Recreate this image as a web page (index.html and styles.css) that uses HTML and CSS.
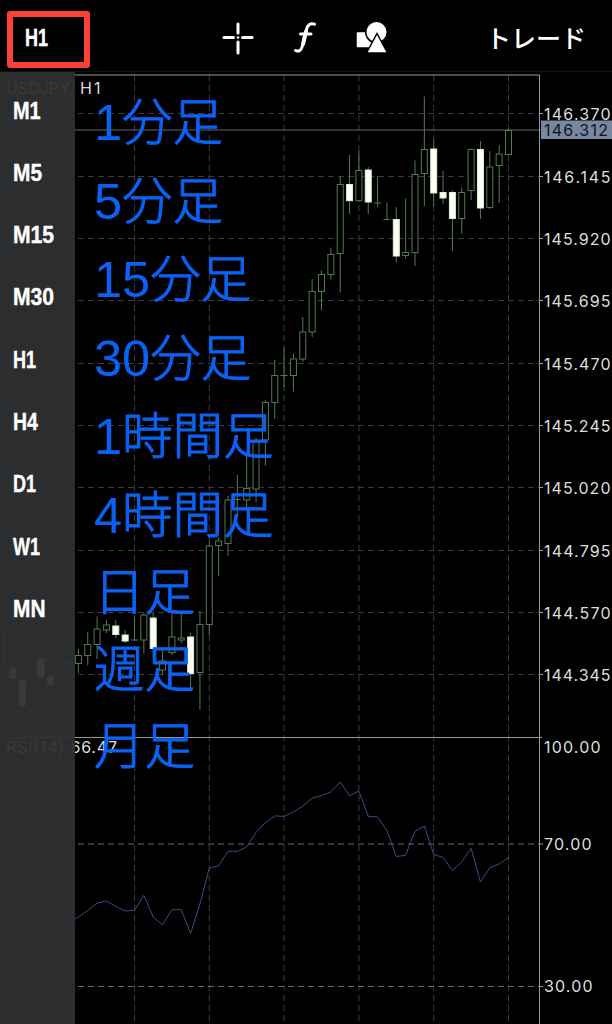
FILE: index.html
```html
<!DOCTYPE html>
<html lang="ja">
<head>
<meta charset="utf-8">
<title>USDJPY H1</title>
<link rel="stylesheet" href="styles.css">
</head>
<body>
<header class="toolbar">
  <button class="current"><span class="narrow h1">H1</span></button>
  <nav class="tools">
    <svg width="32" height="32" viewBox="0 0 32 32" class="stroke"><path d="M16 2V11M16 20V31M1.900 15.500H11.500M20.500 15.500H30.100"/><circle cx="16" cy="15.500" r="1.300" class="dot"/></svg>
    <svg width="24" height="32" viewBox="0 0 24 32" class="stroke fx"><path d="M1.500 28.500C5.500 30.500 7.600 27.500 8.700 23L12.500 7.500C13.700 2.500 16.500 .8 20.500 2.200M6.500 12H17"/><path class="stem" d="M9.200 21.500L12 9.500"/></svg>
    <svg width="32" height="32" viewBox="0 0 32 32" class="shapes"><rect x="1" y="9.500" width="16" height="16.500" rx="1.500"/><circle cx="21.500" cy="10" r="10.800"/><path d="M22 11.500L32.500 31H11.500Z"/></svg>
  </nav>
  <span class="trade">トレード</span>
</header>
<main class="stage">
  <svg id="chart" class="chart" width="612" height="952" viewBox="0 72 612 952"></svg>
  <ul class="frames">
    <li><span class="narrow m1">M1</span></li>
    <li><span class="narrow m5">M5</span></li>
    <li><span class="narrow m15">M15</span></li>
    <li><span class="narrow m15">M30</span></li>
    <li><span class="narrow h1">H1</span></li>
    <li><span class="narrow h4">H4</span></li>
    <li><span class="narrow h1">D1</span></li>
    <li><span class="narrow h1">W1</span></li>
    <li><span class="narrow m5">MN</span></li>
  </ul>
  <ul class="notes">
    <li><b>1</b>分足</li><li><b>5</b>分足</li><li><b>15</b>分足</li><li><b>30</b>分足</li><li><b>1</b>時間足</li><li><b>4</b>時間足</li>
    <li class="long">日足</li><li class="long">週足</li><li class="long">月足</li>
  </ul>
</main>
<script src="chart.js"></script>
</body>
</html>
```
FILE: styles.css
```css
* { box-sizing: border-box; }
body { margin: 0; width: 612px; height: 1024px; overflow: hidden; background: #000; color: #fff; font-family: "Liberation Sans", "Noto Sans CJK JP", sans-serif; }
ul { list-style: none; margin: 0; padding: 0; }
.toolbar { height: 72px; display: flex; align-items: center; padding: 8px 26px 4px 7px; border-bottom: 1px solid #111; }
.current { width: 83px; height: 57px; margin-top: 3px; padding: 0 0 2px 12px; text-align: left; background: none; border: 6px solid #fb4038; border-radius: 3px; color: #fff; }
.narrow { display: inline-block; font: bold 24px/28px "Liberation Sans", sans-serif; transform-origin: 0 50%; -webkit-text-stroke: .4px #fff; }
.m1 { transform: scaleX(.83); }
.m5 { transform: scaleX(.87); }
.m15 { transform: scaleX(.88); }
.h1 { transform: scaleX(.75); }
.h4 { transform: scaleX(.81); }
.tools { display: flex; align-items: center; margin-left: 131.500px; }
.tools svg { display: block; overflow: visible; }
.tools .fx { margin: 0 37px 0 40.500px; }
.stroke { fill: none; stroke: #fff; stroke-width: 3; stroke-linecap: round; }
.stroke .dot { fill: #fff; stroke: none; }
.stroke .stem { stroke-width: 4; }
.shapes { fill: #fff; stroke: #000; stroke-width: 1.500px; }
.trade { margin-left: auto; margin-top: -2px; font: 500 25px/30px "Noto Sans CJK JP", sans-serif; }
.stage { height: 952px; display: grid; grid-template-columns: 75px 1fr; }
.chart { grid-area: 1 / 1 / 2 / 3; display: block; }
.frames { grid-area: 1 / 1 / 2 / 2; z-index: 1; background: rgba(46, 47, 50, .95); padding: 6.500px 0 0 12.700px; }
.frames li { height: 62.300px; padding-top: 18px; }
.notes { grid-area: 1 / 2 / 2 / 3; z-index: 1; padding: 12px 0 0 19px; color: #0a62f5; font-size: 50.500px; font-weight: 300; line-height: 78.500px; -webkit-text-stroke: 1px #0a62f5; }
.notes b { font-weight: 400; -webkit-text-stroke: 0; }
.notes li { height: 78.500px; white-space: nowrap; }
.notes .long { height: 77px; line-height: 75px; }
.grid { stroke: #3c3c3c; stroke-dasharray: 6 4; fill: none; }
.level { stroke: #6a6a6a; stroke-dasharray: 6 4; fill: none; }
.frame { stroke: #9a9a9a; fill: none; }
.bid { stroke: #626466; }
.candle { stroke: #527b50; fill: #000; }
.candle.down { stroke: #dcefd5; fill: #fffff5; }
.wick { stroke: #527b50; }
.rsi { stroke: #414983; fill: none; }
.axis { fill: #dedede; font: 16px Inter, sans-serif; }
.tag { fill: #7788a0; }
.axis.now { fill: #10161e; }
```
FILE: chart.js
```js
const svg = document.getElementById("chart");
const STEP = 9.35, LAST = 508.5;

function add(tag, attrs, text) {
  const el = document.createElementNS("http://www.w3.org/2000/svg", tag);
  for (const k in attrs) el.setAttribute(k, attrs[k]);
  if (text) el.textContent = text;
  svg.appendChild(el);
}
const line = (cls, x1, y1, x2, y2) => add("line", { class: cls, x1, y1, x2, y2 });
const label = (x, y, text, w, cls) =>
  add("text", { x, y, class: "axis " + (cls || ""), textLength: w, lengthAdjust: "spacing" }, text);

// high, body top, body bottom, low, filled
const candles = [
  [627,640,640,667],[666,668,678,680,1],[678,681,705,718,1],[650,659,681,690],[655,659,677,680,1],
  [674,677,685,688,1],[670,678,684,688],[660,663,678,684],
  [649,655.5,663.5,673],[632,644.5,655.5,665.5],[616.5,629,644.5,659],[620,625,630,633],
  [620,626,634.5,638,1],[630,635,641,643,1],[618,640,640,641],[613,615,640,653.5],
  [613,618,648.5,657,1],[649,661,670,675],[613,637,652.5,655],[612,638,640,643],
  [633,637,673.5,691,1],[611,624.5,672.5,710],[541,546,624.5,635],[537,541,545.5,576],
  [496,500,543.5,556],[475,499.5,499.5,515],[455,488.5,500,508],[438,440.5,489,502],
  [400,402.5,440,465.5],[360,375.5,402.5,419],[348,375.5,375.5,387],[353.5,359,375.5,391.5],
  [317,332,359,362],[279,291.5,332,337],[270.5,274.5,291.5,310],[247.5,254.5,274.5,279.5],
  [176.5,184.5,253.5,292.5],[155,184.5,200.7,214,1],[151,170.5,200.7,202],[167,170,202,214,1],
  [176,203,203,207.5],[202.5,219.5,219.5,220],[207,219.5,256,262.5,1],[198.5,252.5,255.5,259],
  [160.5,174.5,252.5,266],[96.5,149.5,173.5,206],[139.5,149,193,206,1],[171,192.5,198,204,1],
  [190.5,192.5,218.5,251,1],[187.5,192.5,218.5,233.5],[148.5,149.5,190.5,200],[141,149.5,208,219,1],
  [151,167,207.5,209],[145,154,165.5,203],[128.5,130.5,154.5,155]
];
const rsi = [
  930,934,928,925,932,927,926,922,
  917,910.5,903,901,906.5,911,910.3,895.3,917,924.7,909.7,909.7,933.5,904,868,865.7,851.3,851.3,
  847,832.5,822.5,816,816.3,812,806,798.3,795.5,792,782,795.7,791,816.3,817,830.5,856.5,855.3,
  831.3,826,854.5,857.5,870.5,862,848.3,882,867.7,864,857.3
];
const xAt = (i, n) => LAST - (n - 1 - i) * STEP;

for (let i = 0; i < 7; i++) line("grid", 508.5 - i * 74.8, 75, 508.5 - i * 74.8, 1024);
const prices = ["146.370","146.145","145.920","145.695","145.470","145.245","145.020","144.795","144.570","144.345"];
prices.forEach((p, i) => {
  const y = Math.round(113.3 + i * 62.35) + 0.5;
  line("grid", -2, y, 539, y);
  line("frame", 539, y, 543, y);
  label(544, y + 6.2, p, 66.5);
});
line("level", -2, 844, 539, 844);
line("level", -2, 986.5, 539, 986.5);
line("frame", 539, 844, 543, 844);
line("frame", 539, 986.5, 543, 986.5);
line("bid", 0, 130, 541, 130);

candles.forEach(([hi, top, bot, lo, down], i) => {
  const x = xAt(i, candles.length);
  line("wick", x, hi, x, lo);
  if (top === bot) line("wick", x - 3.5, top, x + 3.5, top);
  else add("rect", { class: "candle" + (down ? " down" : ""), x: x - 3, y: top, width: 6, height: bot - top });
});

add("polyline", { class: "rsi", points: rsi.map((y, i) => xAt(i, rsi.length) + "," + y).join(" ") });
line("frame", 0, 75, 539.5, 75);
line("frame", 539.5, 75, 539.5, 1024);
line("frame", 0, 737.5, 542, 737.5);
label(544, 752.5, "100.00", 56.5);
label(544, 849.8, "70.00", 47.5);
label(544, 992, "30.00", 48.5);
add("rect", { class: "tag", x: 541, y: 120.5, width: 71, height: 18.5 });
label(544, 136, "146.312", 64, "now");
label(6, 94, "USDJPY,", 68);
label(80, 94, "H1", 20.5);
label(6, 752.5, "RSI(14) 66.47", 111);
```
